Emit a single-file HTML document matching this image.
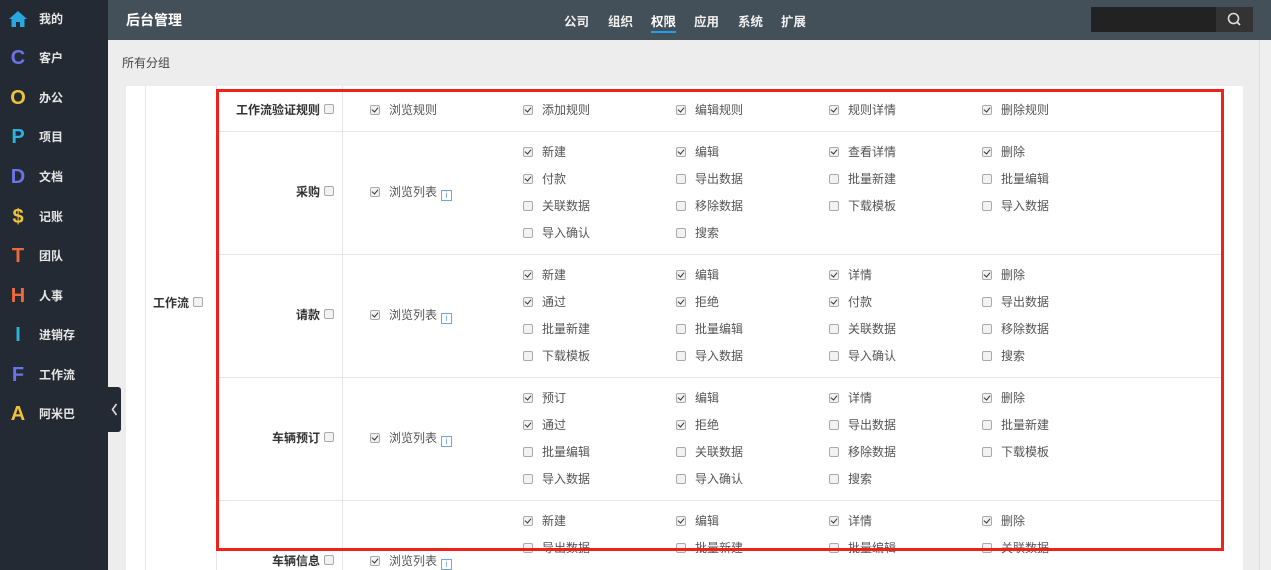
<!DOCTYPE html>
<html><head><meta charset="utf-8"><style>
*{margin:0;padding:0;box-sizing:border-box}
body{width:1271px;height:570px;overflow:hidden;background:#ededed;font-family:"Liberation Sans","Noto Sans CJK SC",sans-serif;position:relative;font-size:12px;color:#555}
.sb{position:absolute;left:0;top:0;width:108px;height:570px;background:#232a33}
.si{position:absolute;left:0;height:20px;width:108px}
.si .ic{position:absolute;left:8px;top:0;width:20px;text-align:center;font-weight:bold;font-size:20px;line-height:20px;font-family:"Liberation Sans",sans-serif}
.si .t{position:absolute;left:39px;top:2px;color:#e6e6e6;font-weight:bold;font-size:12px;line-height:16px}
.hd{position:absolute;left:108px;top:0;width:1163px;height:40px;background:#434f59}
.hd .ttl{position:absolute;left:18px;top:10px;color:#fff;font-size:14px;font-weight:bold}
.nav{position:absolute;top:11px;color:#f0f0f0;font-size:12.5px;font-weight:bold}
.srch{position:absolute;left:983px;top:7px;width:125px;height:25px;background:#222}
.sbtn{position:absolute;left:1108px;top:7px;width:37px;height:25px;background:#333}
.scr{position:absolute;left:1259px;top:40px;width:12px;height:530px;background:#efefef;border-left:1px solid #ddd}
.panel{position:absolute;left:126px;top:86px;width:1117px;height:484px;background:#fff}
.vl{position:absolute;top:86px;width:1px;height:484px;background:#e4e6ee}
.hl{position:absolute;left:217px;width:1005px;height:1px;background:#e4e6ee}
.red{position:absolute;left:216px;top:89px;width:1008px;height:462px;border:3px solid #f0201a}
.c{position:absolute;height:14px;line-height:14px;white-space:nowrap;color:#555;font-size:12px}
.c i{display:inline-block;width:10px;height:10px;border:1px solid #aaa;border-radius:2px;background:#f2f2f2;vertical-align:-1px;margin-right:9px;position:relative}
.c i.k::after{content:"";position:absolute;left:2px;top:0px;width:3px;height:5px;border:solid #333;border-width:0 1.5px 1.5px 0;transform:rotate(40deg)}
.lb{position:absolute;font-weight:bold;color:#333;font-size:12px;white-space:nowrap;line-height:14px}
.lb i{display:inline-block;width:10px;height:10px;border:1px solid #aaa;border-radius:2px;background:#f2f2f2;margin-left:4px;vertical-align:0}
.pl{display:inline-block;width:11px;height:11px;border:1px solid #6aa9e0;margin-left:4px;vertical-align:-2px;position:relative;color:#6aa9e0;font-size:9px;line-height:9px;text-align:center}
</style></head><body>
<div class="sb">
<div class="si" style="top:9px"><span class="ic"><svg width="20" height="20" viewBox="0 0 20 20"><path d="M1 10 L10 2 L19 10 L16.5 10 L16.5 18 L12 18 L12 13 L8 13 L8 18 L3.5 18 L3.5 10 Z" fill="#29a8e0"/></svg></span><span class="t">我的</span></div>
<div class="si" style="top:48px"><span class="ic" style="color:#6b73e6">C</span><span class="t">客户</span></div>
<div class="si" style="top:88px"><span class="ic" style="color:#f0c23a">O</span><span class="t">办公</span></div>
<div class="si" style="top:127px"><span class="ic" style="color:#2bb3dd">P</span><span class="t">项目</span></div>
<div class="si" style="top:167px"><span class="ic" style="color:#6b73e6">D</span><span class="t">文档</span></div>
<div class="si" style="top:207px"><span class="ic" style="color:#f0c23a">$</span><span class="t">记账</span></div>
<div class="si" style="top:246px"><span class="ic" style="color:#ef6a3a">T</span><span class="t">团队</span></div>
<div class="si" style="top:286px"><span class="ic" style="color:#ef6a3a">H</span><span class="t">人事</span></div>
<div class="si" style="top:325px"><span class="ic" style="color:#2bb3dd">I</span><span class="t">进销存</span></div>
<div class="si" style="top:365px"><span class="ic" style="color:#6b73e6">F</span><span class="t">工作流</span></div>
<div class="si" style="top:404px"><span class="ic" style="color:#f0c23a">A</span><span class="t">阿米巴</span></div>
</div>
<div style="position:absolute;left:108px;top:387px;width:13px;height:45px;background:#232a33;border-radius:0 3px 3px 0"><svg width="13" height="45"><path d="M8.5 17 L4.5 22.5 L8.5 28" fill="none" stroke="#ddd" stroke-width="1.6"/></svg></div>
<div class="hd"><div class="ttl">后台管理</div>
<span class="nav" style="left:456px">公司</span><span class="nav" style="left:500px">组织</span><span class="nav" style="left:543px;color:#fff">权限</span><span class="nav" style="left:586px">应用</span><span class="nav" style="left:630px">系统</span><span class="nav" style="left:673px">扩展</span>
<div style="position:absolute;left:543px;top:31px;width:25px;height:2px;background:#1ca3ec"></div>
<div class="srch"></div><div class="sbtn"><svg width="37" height="25"><circle cx="17.5" cy="11.5" r="5" fill="none" stroke="#ddd" stroke-width="1.6"/><line x1="21" y1="15" x2="24" y2="18" stroke="#ddd" stroke-width="1.8"/></svg></div>
</div>
<div class="scr"></div>
<div style="position:absolute;left:122px;top:54px;font-size:12px;color:#444">所有分组</div>
<div class="panel"></div>
<div class="vl" style="left:145px"></div><div class="vl" style="left:216px"></div><div class="vl" style="left:342px"></div>
<div class="hl" style="top:131px"></div><div class="hl" style="top:254px"></div><div class="hl" style="top:377px"></div><div class="hl" style="top:500px"></div>
<div class="lb" style="left:153px;top:296px">工作流<i></i></div>
<div class="lb" style="right:937px;top:103px">工作流验证规则<i></i></div>
<div class="lb" style="right:937px;top:185px">采购<i></i></div>
<div class="lb" style="right:937px;top:308px">请款<i></i></div>
<div class="lb" style="right:937px;top:431px">车辆预订<i></i></div>
<div class="lb" style="right:937px;top:554px">车辆信息<i></i></div>

<div class="c" style="left:370px;top:103px"><i class="k"></i>浏览规则</div>
<div class="c" style="left:523px;top:103px"><i class="k"></i>添加规则</div>
<div class="c" style="left:676px;top:103px"><i class="k"></i>编辑规则</div>
<div class="c" style="left:829px;top:103px"><i class="k"></i>规则详情</div>
<div class="c" style="left:982px;top:103px"><i class="k"></i>删除规则</div>

<div class="c" style="left:370px;top:185px"><i class="k"></i>浏览列表<span class="pl">i</span></div>
<div class="c" style="left:523px;top:145px"><i class="k"></i>新建</div>
<div class="c" style="left:676px;top:145px"><i class="k"></i>编辑</div>
<div class="c" style="left:829px;top:145px"><i class="k"></i>查看详情</div>
<div class="c" style="left:982px;top:145px"><i class="k"></i>删除</div>
<div class="c" style="left:523px;top:172px"><i class="k"></i>付款</div>
<div class="c" style="left:676px;top:172px"><i></i>导出数据</div>
<div class="c" style="left:829px;top:172px"><i></i>批量新建</div>
<div class="c" style="left:982px;top:172px"><i></i>批量编辑</div>
<div class="c" style="left:523px;top:199px"><i></i>关联数据</div>
<div class="c" style="left:676px;top:199px"><i></i>移除数据</div>
<div class="c" style="left:829px;top:199px"><i></i>下载模板</div>
<div class="c" style="left:982px;top:199px"><i></i>导入数据</div>
<div class="c" style="left:523px;top:226px"><i></i>导入确认</div>
<div class="c" style="left:676px;top:226px"><i></i>搜索</div>

<div class="c" style="left:370px;top:308px"><i class="k"></i>浏览列表<span class="pl">i</span></div>
<div class="c" style="left:523px;top:268px"><i class="k"></i>新建</div>
<div class="c" style="left:676px;top:268px"><i class="k"></i>编辑</div>
<div class="c" style="left:829px;top:268px"><i class="k"></i>详情</div>
<div class="c" style="left:982px;top:268px"><i class="k"></i>删除</div>
<div class="c" style="left:523px;top:295px"><i class="k"></i>通过</div>
<div class="c" style="left:676px;top:295px"><i class="k"></i>拒绝</div>
<div class="c" style="left:829px;top:295px"><i class="k"></i>付款</div>
<div class="c" style="left:982px;top:295px"><i></i>导出数据</div>
<div class="c" style="left:523px;top:322px"><i></i>批量新建</div>
<div class="c" style="left:676px;top:322px"><i></i>批量编辑</div>
<div class="c" style="left:829px;top:322px"><i></i>关联数据</div>
<div class="c" style="left:982px;top:322px"><i></i>移除数据</div>
<div class="c" style="left:523px;top:349px"><i></i>下载模板</div>
<div class="c" style="left:676px;top:349px"><i></i>导入数据</div>
<div class="c" style="left:829px;top:349px"><i></i>导入确认</div>
<div class="c" style="left:982px;top:349px"><i></i>搜索</div>

<div class="c" style="left:370px;top:431px"><i class="k"></i>浏览列表<span class="pl">i</span></div>
<div class="c" style="left:523px;top:391px"><i class="k"></i>预订</div>
<div class="c" style="left:676px;top:391px"><i class="k"></i>编辑</div>
<div class="c" style="left:829px;top:391px"><i class="k"></i>详情</div>
<div class="c" style="left:982px;top:391px"><i class="k"></i>删除</div>
<div class="c" style="left:523px;top:418px"><i class="k"></i>通过</div>
<div class="c" style="left:676px;top:418px"><i class="k"></i>拒绝</div>
<div class="c" style="left:829px;top:418px"><i></i>导出数据</div>
<div class="c" style="left:982px;top:418px"><i></i>批量新建</div>
<div class="c" style="left:523px;top:445px"><i></i>批量编辑</div>
<div class="c" style="left:676px;top:445px"><i></i>关联数据</div>
<div class="c" style="left:829px;top:445px"><i></i>移除数据</div>
<div class="c" style="left:982px;top:445px"><i></i>下载模板</div>
<div class="c" style="left:523px;top:472px"><i></i>导入数据</div>
<div class="c" style="left:676px;top:472px"><i></i>导入确认</div>
<div class="c" style="left:829px;top:472px"><i></i>搜索</div>

<div class="c" style="left:370px;top:554px"><i class="k"></i>浏览列表<span class="pl">i</span></div>
<div class="c" style="left:523px;top:514px"><i class="k"></i>新建</div>
<div class="c" style="left:676px;top:514px"><i class="k"></i>编辑</div>
<div class="c" style="left:829px;top:514px"><i class="k"></i>详情</div>
<div class="c" style="left:982px;top:514px"><i class="k"></i>删除</div>
<div class="c" style="left:523px;top:541px"><i></i>导出数据</div>
<div class="c" style="left:676px;top:541px"><i></i>批量新建</div>
<div class="c" style="left:829px;top:541px"><i></i>批量编辑</div>
<div class="c" style="left:982px;top:541px"><i></i>关联数据</div>

<div class="red"></div>
</body></html>
